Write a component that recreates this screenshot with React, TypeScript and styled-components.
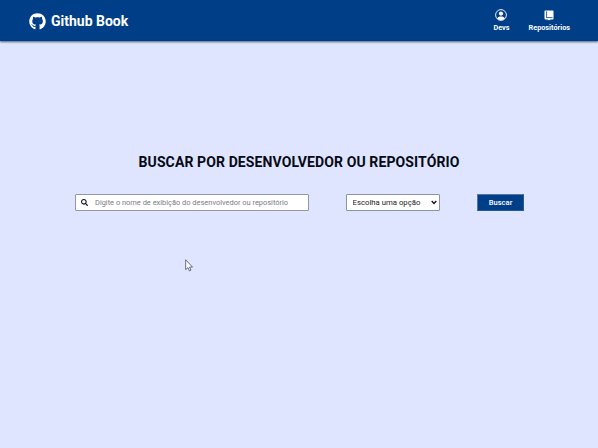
import React from "react";
import styled, { createGlobalStyle } from "styled-components";
import { FaGithub, FaSearch } from "react-icons/fa";

const GlobalStyle = createGlobalStyle`
  * { box-sizing: border-box; }
  body {
    margin: 0;
    background: #dfe4ff;
    font-family: Roboto, sans-serif;
  }
`;

const Page = styled.div`
  min-height: 100vh;
  overflow: hidden;
`;

const Header = styled.header`
  display: flex;
  align-items: center;
  justify-content: space-between;
  height: 41px;
  padding: 0 28px 0 29px;
  background: #003e87;
  color: #fff;
  box-shadow: 0 1px 2px rgba(0, 0, 0, 0.6);
`;

const Brand = styled.a`
  display: flex;
  align-items: center;
  gap: 5px;
  height: 100%;
  padding-top: 1px;
  font-size: 14px;
  font-weight: 700;
  line-height: 16px;
  white-space: nowrap;
`;

const Nav = styled.nav`
  display: flex;
  gap: 19px;
`;

const NavItem = styled.a`
  display: flex;
  flex-direction: column;
  align-items: center;
  gap: 3px;
  font-size: 7.3px;
  font-weight: 700;
  line-height: 8px;
  white-space: nowrap;

  svg { display: block; }
`;

const Main = styled.main`
  padding: 113px 75px 0 75px;
`;

const Title = styled.h1`
  margin: 0 0 23px;
  text-align: center;
  color: #050a14;
  font-size: 14px;
  font-weight: 700;
  line-height: 17px;
  letter-spacing: 0.11px;
  white-space: nowrap;
`;

const SearchForm = styled.form`
  display: flex;
  justify-content: space-between;
  height: 17px;
`;

const SearchField = styled.label`
  display: flex;
  align-items: center;
  gap: 7px;
  width: 234px;
  padding: 0 5px;
  border: 1px solid #9298a8;
  border-radius: 1px;
  background: #fff;
  color: #111;
`;

const SearchInput = styled.input`
  flex: 1;
  min-width: 0;
  padding: 0;
  border: 0;
  outline: 0;
  background: transparent;
  font: 7.45px/13px Roboto, sans-serif;

  &::placeholder { color: #7c7c80; opacity: 1; }
`;

const SelectBox = styled.div`
  display: grid;
  align-items: center;
  width: 94px;
  margin-left: -1px;

  > * { grid-area: 1 / 1; }
  svg { justify-self: end; margin-right: 3px; pointer-events: none; }
`;

const Select = styled.select`
  appearance: none;
  width: 100%;
  height: 17px;
  padding: 0 0 0 6px;
  border: 1px solid #8c93a3;
  border-radius: 1px;
  background: #fff;
  color: #1c1c1c;
  font: 7.75px/13px Roboto, sans-serif;
`;

const SubmitButton = styled.button`
  width: 47px;
  height: 17px;
  margin-right: -1px;
  padding: 0;
  border: 1px solid #5376b0;
  border-right-color: #28579a;
  border-bottom-color: #28579a;
  background: #003e87;
  color: #fff;
  font: 500 7.6px/14px Roboto, sans-serif;
`;

const Cursor = styled.svg`
  position: absolute;
  left: 185px;
  top: 259px;
`;

function DevIcon() {
  return (
    <svg width="12" height="12" viewBox="0 0 12 12">
      <circle cx="6" cy="6" r="5.4" fill="none" stroke="#fff" strokeWidth="0.9" />
      <circle cx="6" cy="4.6" r="2.1" fill="#fff" />
      <path d="M2.3 9.5C2.8 7.9 4 7.4 6 7.4s3.2.5 3.7 2.1C8.8 10.5 7.5 11.1 6 11.1S3.2 10.5 2.3 9.5Z" fill="#fff" />
    </svg>
  );
}

function RepoIcon() {
  return (
    <svg width="10" height="12" viewBox="0 0 10 12">
      <path d="M1.3 1.4h7.5q.7 0 .7.7v7.6q0 .7-.7.7H6.2v1L5 10.8l-1.2.6v-1H1.3q-.8 0-.8-.8V2.2q0-.8.8-.8Z" fill="#fff" />
      <path d="M2.6 2.3v5.8M2.1 8.6h6.4" stroke="#003e87" strokeWidth="0.8" fill="none" />
    </svg>
  );
}

export default function App() {
  return (
    <Page>
      <GlobalStyle />
      <Header>
        <Brand>
          <FaGithub size={17} />
          Github Book
        </Brand>
        <Nav>
          <NavItem>
            <DevIcon />
            Devs
          </NavItem>
          <NavItem>
            <RepoIcon />
            Repositórios
          </NavItem>
        </Nav>
      </Header>
      <Main>
        <Title>BUSCAR POR DESENVOLVEDOR OU REPOSITÓRIO</Title>
        <SearchForm onSubmit={(event: React.FormEvent) => event.preventDefault()}>
          <SearchField>
            <FaSearch size={7} />
            <SearchInput placeholder="Digite o nome de exibição do desenvolvedor ou repositório" />
          </SearchField>
          <SelectBox>
            <Select defaultValue="">
              <option value="">Escolha uma opção</option>
              <option value="dev">Desenvolvedor</option>
              <option value="repo">Repositório</option>
            </Select>
            <svg width="6" height="5" viewBox="0 0 6 5">
              <path d="M.7 1 3 3.5 5.3 1" fill="none" stroke="#111" strokeWidth="1.3" />
            </svg>
          </SelectBox>
          <SubmitButton type="submit">Buscar</SubmitButton>
        </SearchForm>
      </Main>
      <Cursor width="9" height="13" viewBox="0 0 9 13">
        <path d="M.7.8v9.8l2.2-2 1.5 3.3 1.5-.7-1.4-3.1h3Z" fill="#fff" stroke="#454a58" strokeWidth="0.8" />
      </Cursor>
    </Page>
  );
}
